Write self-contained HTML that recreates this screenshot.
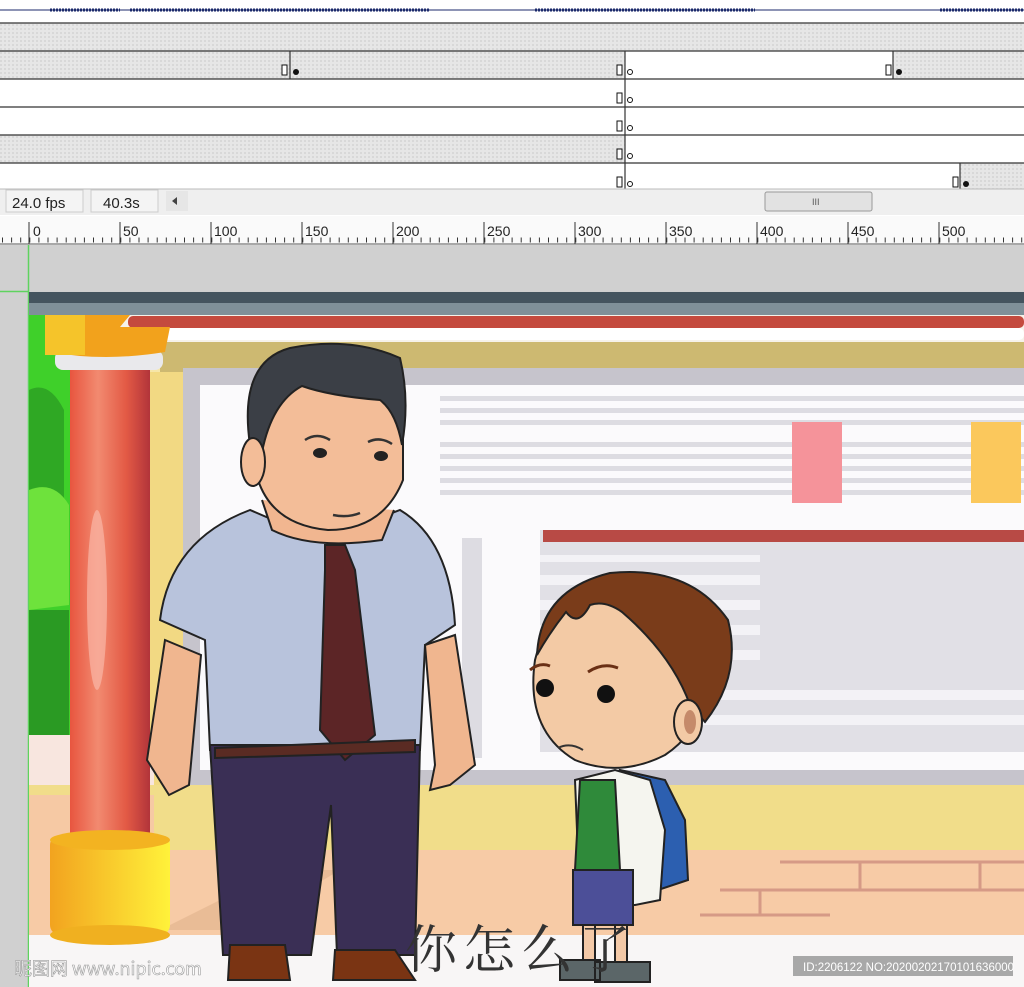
<!DOCTYPE html>
<html><head><meta charset="utf-8"><style>
html,body{margin:0;padding:0;width:1024px;height:987px;overflow:hidden;background:#fff;font-family:"Liberation Sans","Noto Sans CJK SC",sans-serif}
svg{display:block}
</style></head><body>
<svg width="1024" height="987" viewBox="0 0 1024 987" xmlns="http://www.w3.org/2000/svg">
<defs>
<pattern id="hatch" width="4" height="4" patternUnits="userSpaceOnUse"><rect width="4" height="4" fill="#e6e6e6"/><rect width="2" height="2" fill="#d8d8d8"/></pattern>
<linearGradient id="pil" x1="0" x2="1"><stop offset="0" stop-color="#e8553f"/><stop offset=".35" stop-color="#f28a70"/><stop offset=".7" stop-color="#e35a45"/><stop offset="1" stop-color="#b2343a"/></linearGradient>
<linearGradient id="base" x1="0" x2="1"><stop offset="0" stop-color="#f2a31f"/><stop offset="1" stop-color="#fff23a"/></linearGradient>
</defs>
<!-- timeline -->
<rect x="0" y="0" width="1024" height="23" fill="#fff"/>
<path d="M0 10 H1024" stroke="#1b2a6b" stroke-width="1"/>
<path d="M50 10h70M130 10h300M535 10h220M940 10h84" stroke="#1b2a6b" stroke-width="3" stroke-dasharray="2 1"/>
<rect x="0" y="23" width="1024" height="28" fill="url(#hatch)"/>
<rect x="0" y="51" width="625" height="28" fill="url(#hatch)"/>
<rect x="625" y="51" width="268" height="28" fill="#fff"/>
<rect x="893" y="51" width="131" height="28" fill="url(#hatch)"/>
<rect x="0" y="79" width="1024" height="56" fill="#fff"/>
<rect x="0" y="135" width="625" height="28" fill="url(#hatch)"/>
<rect x="625" y="135" width="399" height="28" fill="#fff"/>
<rect x="0" y="163" width="960" height="26" fill="#fff"/>
<rect x="960" y="163" width="64" height="26" fill="url(#hatch)"/>
<g stroke="#333" stroke-width="1.2"><path d="M0 23H1024M0 51H1024M0 79H1024M0 107H1024M0 135H1024M0 163H1024"/>
<path d="M290 51V79M625 51V189M893 51V79M960 163V189"/></g>
<g fill="#fff" stroke="#111" stroke-width="1"><rect x="282" y="65" width="5" height="10"/><rect x="617" y="65" width="5" height="10"/><rect x="886" y="65" width="5" height="10"/><rect x="617" y="93" width="5" height="10"/><rect x="617" y="121" width="5" height="10"/><rect x="617" y="149" width="5" height="10"/><rect x="617" y="177" width="5" height="10"/><rect x="953" y="177" width="5" height="10"/>
<circle cx="630" cy="72" r="2.5"/><circle cx="630" cy="100" r="2.5"/><circle cx="630" cy="128" r="2.5"/><circle cx="630" cy="156" r="2.5"/><circle cx="630" cy="184" r="2.5"/></g>
<g fill="#111"><circle cx="296" cy="72" r="3"/><circle cx="899" cy="72" r="3"/><circle cx="966" cy="184" r="3"/></g>
<rect x="0" y="189" width="1024" height="26" fill="#efefef"/>
<path d="M0 189H1024" stroke="#bbb"/>
<rect x="6" y="190" width="77" height="22" fill="#f4f4f4" stroke="#ccc"/>
<text x="12" y="208" font-size="15" fill="#222">24.0 fps</text>
<rect x="91" y="190" width="67" height="22" fill="#f4f4f4" stroke="#ccc"/>
<text x="103" y="208" font-size="15" fill="#222">40.3s</text>
<rect x="166" y="191" width="22" height="20" fill="#e6e6e6"/>
<path d="M172 201l5-4v8z" fill="#444"/>
<rect x="765" y="192" width="107" height="19" rx="2" fill="#e2e2e2" stroke="#999"/>
<text x="812" y="205" font-size="9" fill="#555">III</text>
<rect x="0" y="216" width="1024" height="29" fill="#fafafa"/>
<path d="M0 244H1024" stroke="#555"/>
<g stroke="#333" stroke-width="1">
<path d="M29 222V244M120 222V244M211 222V244M302 222V244M393 222V244M484 222V244M575 222V244M666 222V244M757 222V244M848 222V244M939 222V244"/>
</g>
<g stroke="#333" stroke-width="1" stroke-dasharray="1 8.1"><path d="M2 240H1024" stroke-width="5"/></g>
<g font-size="14" fill="#222"><text x="33" y="236">0</text><text x="123" y="236">50</text><text x="214" y="236">100</text><text x="305" y="236">150</text><text x="396" y="236">200</text><text x="487" y="236">250</text><text x="578" y="236">300</text><text x="669" y="236">350</text><text x="760" y="236">400</text><text x="851" y="236">450</text><text x="942" y="236">500</text></g>
<!-- stage -->
<rect x="0" y="245" width="1024" height="742" fill="#d0d0d0"/>
<path d="M28.5 245V987M0 291.5H29" stroke="#5fd35f" stroke-width="1.5"/>
<!-- scene -->
<rect x="29" y="292" width="995" height="695" fill="#f6e6a8"/>
<rect x="29" y="292" width="995" height="11" fill="#44545f"/>
<rect x="29" y="303" width="995" height="12" fill="#7f9099"/>
<rect x="29" y="315" width="995" height="30" fill="#f6f2ea"/>
<rect x="128" y="316" width="896" height="12" rx="5" fill="#c44a3e"/>
<rect x="128" y="328" width="896" height="12" rx="5" fill="#fff"/>
<rect x="160" y="342" width="864" height="30" fill="#cdb971"/>
<rect x="150" y="372" width="40" height="420" fill="#f2d983"/>
<rect x="183" y="368" width="841" height="420" fill="#c6c4cc"/>
<rect x="200" y="385" width="824" height="385" fill="#fbfafc"/>
<g fill="#dddce2"><rect x="440" y="396" width="584" height="5"/><rect x="440" y="408" width="584" height="5"/><rect x="440" y="420" width="584" height="5"/><rect x="440" y="442" width="584" height="5"/><rect x="440" y="454" width="584" height="5"/><rect x="440" y="466" width="584" height="5"/><rect x="440" y="478" width="584" height="5"/><rect x="440" y="490" width="584" height="5"/><rect x="400" y="530" width="25" height="5"/><rect x="400" y="545" width="25" height="5"/><rect x="462" y="538" width="20" height="220"/></g>
<rect x="792" y="422" width="50" height="81" fill="#f5939a"/>
<rect x="971" y="422" width="50" height="81" fill="#fbc85c"/>
<rect x="540" y="530" width="484" height="222" fill="#e1e0e6"/>
<rect x="543" y="530" width="481" height="12" fill="#b84a45"/>
<g fill="#f3f2f6"><rect x="540" y="555" width="220" height="7"/><rect x="540" y="575" width="220" height="10"/><rect x="540" y="600" width="220" height="10"/><rect x="540" y="625" width="220" height="10"/><rect x="540" y="650" width="220" height="10"/><rect x="700" y="690" width="324" height="10"/><rect x="700" y="715" width="324" height="10"/></g>
<rect x="29" y="315" width="45" height="420" fill="#3fd02a"/>
<path d="M29 390q20-10 35 20v90q-20 10-35-10z" fill="#2fa824"/>
<path d="M29 490q25-10 40 15v100l-40 5z" fill="#6ee23c"/>
<rect x="29" y="610" width="40" height="125" fill="#2a9a23"/>
<!-- ground -->
<rect x="29" y="735" width="125" height="60" fill="#f8e6df"/>
<rect x="29" y="785" width="995" height="65" fill="#f1dd8a"/>
<rect x="29" y="795" width="125" height="55" fill="#f6c9a4"/>
<rect x="29" y="850" width="995" height="86" fill="#f7cba6"/>
<g stroke="#d69a86" stroke-width="3" fill="none"><path d="M780 862H1024M860 862V890M720 890H1024M980 862V890M700 915H830M760 890V915"/></g>
<path d="M160 930l120-60 60 0-100 60z" fill="#e0b28c" opacity=".6"/>
<rect x="29" y="935" width="995" height="52" fill="#f8f6f6"/>
<!-- pillar -->
<rect x="70" y="365" width="80" height="480" fill="url(#pil)"/>
<ellipse cx="97" cy="600" rx="10" ry="90" fill="#f9b6a6" opacity=".7"/>
<rect x="55" y="350" width="108" height="20" rx="8" fill="#e9e9ec"/>
<path d="M45 315h85l-10 12h50l-5 25q-60 10-115 0z" fill="#f2a21c"/>
<path d="M45 315h40v40h-40z" fill="#f5c42a"/>
<rect x="50" y="835" width="120" height="100" rx="10" fill="url(#base)"/>
<ellipse cx="110" cy="840" rx="60" ry="10" fill="#f3b321"/>
<ellipse cx="110" cy="935" rx="60" ry="10" fill="#f0b020"/>
<!-- man -->
<g stroke="#222" stroke-width="2">
<path d="M160 620q10-80 90-110l70 30 80-30q50 30 55 115l-30 20 -5 105h-210l-5-110z" fill="#b8c3dc"/>
<path d="M165 640l-18 120 22 35 20-10 12-130z" fill="#f0b68f"/>
<path d="M425 645l10 120 -5 25 20-5 25-20 -20-130z" fill="#f0b68f"/>
<path d="M210 745h210l-5 210h-78l-6-150-20 150h-88z" fill="#3a2f55"/>
<path d="M230 945h55l5 35h-62z" fill="#7a3413"/>
<path d="M335 950h60l20 30h-82z" fill="#7a3413"/>
<path d="M262 500l10 30q40 20 110 10l12-30" fill="#f1b690"/>
<path d="M258 400q5-45 75-50 65 0 70 45l0 85q-20 50-75 50-55-5-70-50z" fill="#f3bd98"/>
<path d="M250 445Q238 362 290 348Q350 336 400 358Q410 400 402 445Q396 412 380 400Q330 396 302 386Q272 402 262 452Z" fill="#3b3f46"/>
<ellipse cx="253" cy="462" rx="12" ry="24" fill="#f3bd98"/>
<path d="M325 545l20 0 10 25 20 165-30 25-25-30 5-160z" fill="#5c2526"/>
<path d="M215 748l200-8v12l-200 6z" fill="#5a2b23"/>
</g>
<g fill="none" stroke="#333" stroke-width="2.5"><path d="M305 440q12-8 25 0M368 442q12-6 24 2M333 515q15 3 27-2"/></g>
<g fill="#222"><ellipse cx="320" cy="453" rx="7" ry="5"/><ellipse cx="381" cy="456" rx="7" ry="5"/></g>
<!-- boy -->
<g stroke="#222" stroke-width="2">
<path d="M620 770l45 10 20 40 3 60-30 10-10-35z" fill="#2c5fb0"/>
<path d="M575 780l40-10 35 10 15 50 -5 70-25 5h-55z" fill="#f5f5ef"/>
<path d="M580 780h35l5 90h-45z" fill="#2f8a3a"/>
<path d="M573 870h60v55h-60z" fill="#4c4f98"/>
<path d="M583 925h12v40h-12zM615 925h12v40h-12z" fill="#f3c9a7"/>
<path d="M560 960h40v20h-40zM595 962h55v20h-55z" fill="#5b6668"/>
<path d="M535 660Q525 730 575 760Q620 778 665 755Q695 735 705 700L705 640Q650 580 600 590Q550 600 535 660Z" fill="#f3caa5"/>
<path d="M537 655Q540 590 610 573Q690 565 728 620Q742 675 705 722L690 705Q672 655 622 612Q605 600 590 605Q578 628 566 612Q550 632 537 655Z" fill="#7a3c1a"/>
<ellipse cx="688" cy="722" rx="14" ry="22" fill="#f3caa5"/>
</g>
<ellipse cx="690" cy="722" rx="6" ry="12" fill="#c58a6a"/>
<g fill="none" stroke="#6a3015" stroke-width="3"><path d="M530 670q10-8 20-4M588 672q15-10 30-4"/></g>
<path d="M558 748q12-6 25 2" fill="none" stroke="#333" stroke-width="2"/>
<g fill="#111"><circle cx="545" cy="688" r="9"/><circle cx="606" cy="694" r="9"/></g>
<!-- subtitle -->
<text x="405" y="968" font-family="'Noto Serif CJK SC','Noto Sans CJK SC',serif" font-size="52" fill="#333" letter-spacing="6">你怎么了</text>
<text x="14" y="975" font-family="'Noto Sans CJK SC',sans-serif" font-size="18" fill="#fff" stroke="#999" stroke-width=".6">昵图网 www.nipic.com</text>
<rect x="793" y="956" width="220" height="20" fill="#9a9a9a" opacity=".85"/>
<text x="803" y="971" font-size="11.5" fill="#fff">ID:2206122 NO:20200202170101636000</text>
</svg>
</body></html>
